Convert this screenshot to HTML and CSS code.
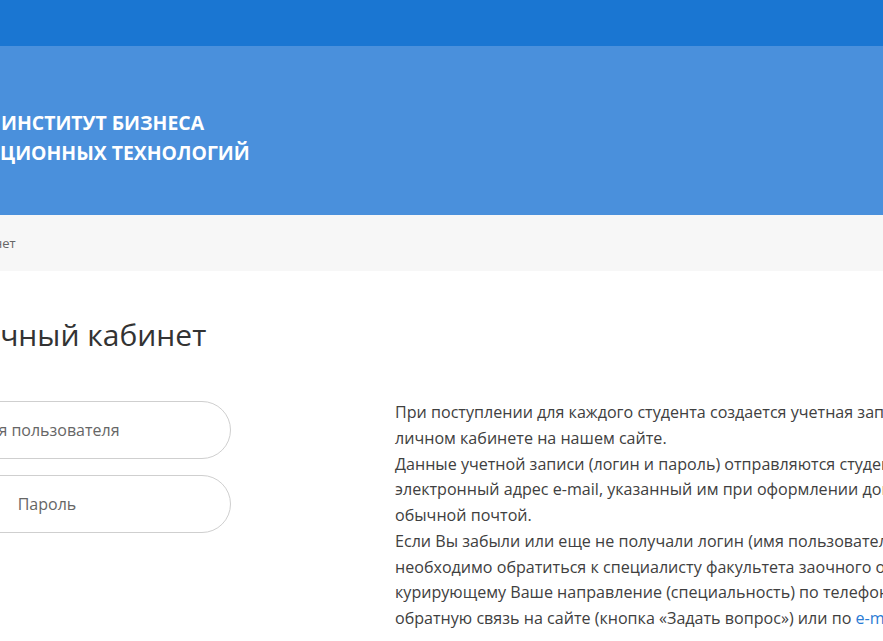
FILE: index.html
```html
<!DOCTYPE html>
<html lang="ru">
<head>
<meta charset="utf-8">
<title>Личный кабинет</title>
<link rel="stylesheet" href="styles.css">
</head>
<body>
<header class="topbar"></header>
<section class="banner">
  <div class="banner-title">
    <span class="line1">ИНСТИТУТ БИЗНЕСА</span>
    <span class="line2">ЦИОННЫХ ТЕХНОЛОГИЙ</span>
  </div>
</section>
<nav class="crumbs"><span class="crumb">нет</span></nav>
<main class="main">
  <h1 class="title">Личный кабинет</h1>
  <div class="cols">
    <form class="login">
      <input class="field" type="text" placeholder="Имя пользователя">
      <input class="field" type="password" placeholder="Пароль">
    </form>
    <div class="info">
      <p>При поступлении для каждого студента создается учетная запись для работы в<br>личном кабинете на нашем сайте.</p>
      <p>Данные учетной записи (логин и пароль) отправляются студенту на<br>электронный адрес e-mail, указанный им при оформлении документов, или<br>обычной почтой.</p>
      <p>Если Вы забыли или еще не получали логин (имя пользователя) и пароль, Вам<br>необходимо обратиться к специалисту факультета заочного обучения,<br>курирующему Ваше направление (специальность) по телефону, через<br>обратную связь на сайте (кнопка «Задать вопрос») или по <a class="link" href="#">e-mail</a>.</p>
    </div>
  </div>
</main>
</body>
</html>
```
FILE: styles.css
```css
html, body {
  margin: 0;
  padding: 0;
  overflow: hidden;
  background: #ffffff;
  font-family: "Open Sans", "Noto Sans", sans-serif;
}

.topbar {
  height: 46px;
  background: #1a76d2;
}

.banner {
  height: 169px;
  background: #4a90dc;
  display: flex;
  align-items: center;
}

.banner-title {
  display: flex;
  flex-direction: column;
  color: #ffffff;
  font-weight: 700;
  font-size: 19.4px;
  line-height: 30px;
  margin-top: 14px;
}

.line1 { margin-left: 1px; }
.line2 { margin-left: 0; }

.crumbs {
  height: 56px;
  background: #f7f7f7;
  display: flex;
  align-items: center;
}

.crumb {
  font-size: 13px;
  color: #666666;
  margin-left: -6px;
}

.main {
  margin-left: -137px;
  white-space: nowrap;
}

.title {
  margin: 46px 0 0 97px;
  font-weight: 400;
  font-size: 30px;
  line-height: 36px;
  color: #333333;
}

.cols {
  display: grid;
  grid-template-columns: 368px 1fr;
  column-gap: 164px;
  margin-top: 47px;
}

.login {
  display: flex;
  flex-direction: column;
  gap: 16px;
  margin-top: 1px;
}

.field {
  box-sizing: border-box;
  height: 58px;
  width: 368px;
  border: 1px solid #cfcfcf;
  border-radius: 29px;
  text-align: center;
  font-family: "Open Sans", "Noto Sans", sans-serif;
  font-size: 16px;
  color: #555555;
  background: #ffffff;
  outline: none;
}

.field::placeholder {
  color: #666666;
}

.info {
  font-size: 16.1px;
  line-height: 25.75px;
  color: #404040;
}

.info p {
  margin: 0;
}

.link {
  color: #2a7bd4;
  text-decoration: none;
}
```
